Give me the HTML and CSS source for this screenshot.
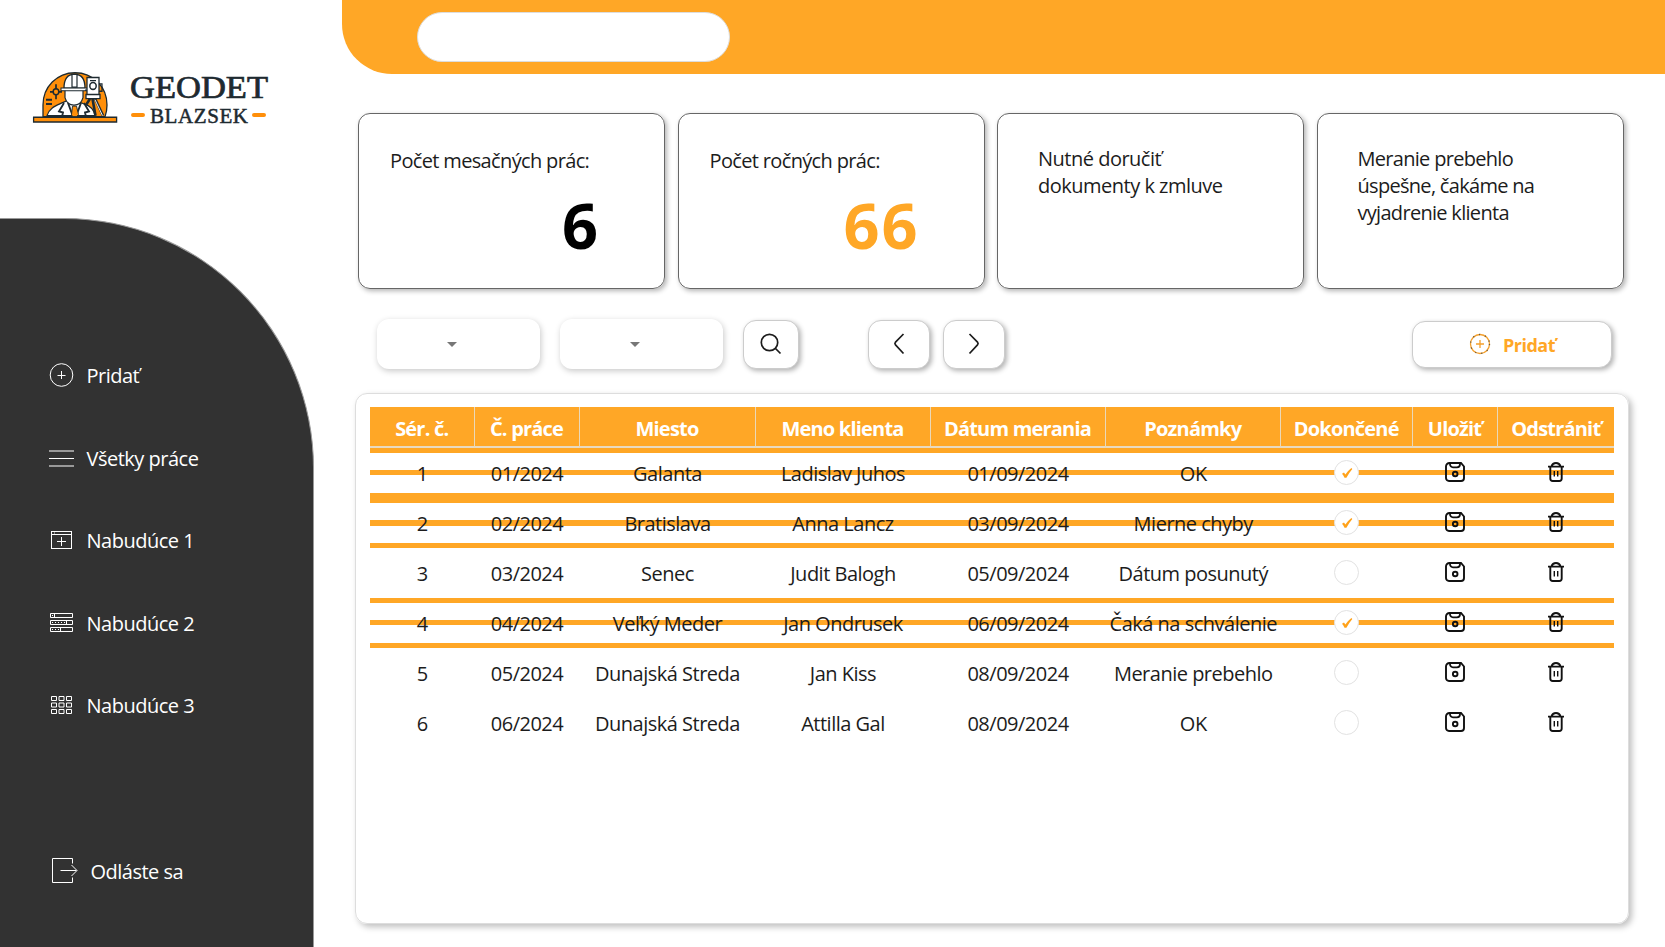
FILE: index.html
```html
<!DOCTYPE html>
<html lang="sk">
<head>
<meta charset="utf-8">
<title>Geodet Blazsek</title>
<link rel="stylesheet" href="styles.css">
</head>
<body>
<svg class="defs" width="0" height="0">
  <symbol id="save" viewBox="0 0 20 20"><path d="M4.500 1h11.500L19 4.500v11.500a3 3 0 0 1-3 3H4a3 3 0 0 1-3-3V4.500A3.500 3.500 0 0 1 4.500 1z" fill="none" stroke="#111" stroke-width="1.900"/><path d="M5 1.500v.8a3 3 0 0 0 3 3h4a3 3 0 0 0 3-3v-.8" fill="none" stroke="#111" stroke-width="1.800"/><circle cx="10.200" cy="12" r="2.300" fill="none" stroke="#111" stroke-width="1.900"/></symbol>
  <symbol id="trash" viewBox="0 0 16 20"><path d="M0 4.600h16M2.300 4.600v11.900a2.500 2.500 0 0 0 2.500 2.500h6.400a2.500 2.500 0 0 0 2.500-2.500V4.600M3.500 4.400C4.200 2 6 1 8 1s3.800 1 4.500 3.400" fill="none" stroke="#111" stroke-width="1.900"/><path d="M6.300 9v5.500M9.700 9v5.500" stroke="#111" stroke-width="1.400"/></symbol>
  <symbol id="check" viewBox="0 0 12 12"><path d="M1 6.800l2-1.200 1.400 1.800Q7 3.600 10.400 1l.9.900Q8 5.800 5.400 10.800H3.500Q2.500 8.300 1 6.800z" fill="#ffa21a"/></symbol>
</svg>
<div class="app">
  <aside class="side">
    <div class="brand">
      <svg class="logo" width="240" height="60" viewBox="0 0 240 60">
        <g transform="translate(0 -1) scale(1 1.060)">
        <path d="M10 45V34C10 17 24 3.500 42 3.500S74 17 74 34q0 6-2 11z" fill="#ff8f0a" stroke="#1e2a30" stroke-width="1.300"/>
        <path d="M14 44c2-7 8-9 15-12l10-4 12 5c7 2 10 6 11 11z" fill="#fff" stroke="#1e2a30" stroke-width="1.200"/>
        <path d="M32 19v8q2 7 9 7t9-7v-8z" fill="#fff" stroke="#1e2a30" stroke-width="1.200"/>
        <path d="M31 18q0-13 10.500-13T52 18z" fill="#fff" stroke="#1e2a30" stroke-width="1.300"/>
        <path d="M28 18h27v2.500H28z" fill="#fff" stroke="#1e2a30" stroke-width="1"/>
        <path d="M39 5h5v12h-5z" fill="#fff" stroke="#1e2a30" stroke-width="1.200"/>
        <path d="M31 32l-5 8 4 1-1 4M51 32l5 8-4 1 1 4M35 32l5 13M48 32l-5 13" fill="none" stroke="#1e2a30" stroke-width="1.800"/>
        <path d="M39.500 35h4l2 8-2 2h-4l-1-2z" fill="#ff8f0a" stroke="#1e2a30" stroke-width=".9"/>
        <path d="M54 8h12v16H54zM53 24h14v4H53z" fill="#fff" stroke="#1e2a30" stroke-width="1.300"/>
        <circle cx="60" cy="16" r="3.200" fill="#fff" stroke="#1e2a30" stroke-width="1.500"/>
        <path d="M57 11h6M54 20h-2M66 14h3v7h-3" fill="none" stroke="#1e2a30" stroke-width="1.200"/>
        <path d="M57 28l-4 6M59.500 28l3 16M62 28l8 16" fill="none" stroke="#1e2a30" stroke-width="2.600"/>
        <path d="M62 29l7.500 15" fill="none" stroke="#fff" stroke-width=".9"/>
        <circle cx="23" cy="21.500" r="2.800" fill="#ff8f0a" stroke="#1e2a30" stroke-width="1.500"/>
        <path d="M23 14.500v4.500M23 24v4.500M17 21.500h3.500M25.500 21.500H29M13 29h6M13 33h6" stroke="#1e2a30" stroke-width="1.700"/>
        <path d="M.600 45.500h83v4.500H.600z" fill="#ff8f0a" stroke="#1e2a30" stroke-width="1.300"/>
        </g>
        <path d="M100 45h10M221 45h10" stroke="#ff8f0a" stroke-width="4" stroke-linecap="round"/>
        <text class="geodet" x="97" y="28.200" textLength="138" lengthAdjust="spacingAndGlyphs">GEODET</text>
        <text class="blazsek" x="117" y="52.500" textLength="98">BLAZSEK</text>
      </svg>
    </div>
    <nav class="menu">
      <a class="item"><svg width="28" height="28"><circle cx="14.500" cy="14" r="11.300" fill="none" stroke="#fff"/><path d="M14.500 10v8M10.500 14.500h8" stroke="#fff"/></svg><span>Pridať</span></a>
      <a class="item"><svg width="28" height="28"><path d="M2 7h25M2 22h25" stroke="#999" stroke-width="2"/><path d="M2 14.500h25" stroke="#fff"/></svg><span>Všetky práce</span></a>
      <a class="item"><svg width="28" height="28"><rect x="4.500" y="5.500" width="20" height="17" fill="none" stroke="#fff"/><path d="M4 8.500h20M14.500 11v9M10 15.500h9" stroke="#fff"/><path d="M7.500 6v2" stroke="#888"/></svg><span>Nabudúce 1</span></a>
      <a class="item"><svg width="28" height="28"><path d="M3.500 4.500h22v4h-22zM3.500 11.500h22v4h-22zM3.500 18.500h22v4h-22zM7.500 4v5M19.500 11v5M13.500 18v5" fill="none" stroke="#fff"/><path d="M5 6.500h1M5 13.500h14M5 20.500h7" stroke="#fff" stroke-dasharray="1 2"/></svg><span>Nabudúce 2</span></a>
      <a class="item"><svg width="28" height="28"><path d="M4.500 5.500h5v4h-5zM12 5.500h5v4h-5zM19.500 5.500h5v4h-5zM4.500 12h5v4h-5zM12 12h5v4h-5zM19.500 12h5v4h-5zM4.500 18.500h5v4h-5zM12 18.500h5v4h-5zM19.500 18.500h5v4h-5z" fill="none" stroke="#fff"/></svg><span>Nabudúce 3</span></a>
      <a class="item out"><svg width="28" height="28"><path d="M21.500 6.500v-5h-20v24h20v-5M9.500 13.500h16M20.500 8l5.500 5.500-5.500 5.500" fill="none" stroke="#fff"/></svg><span>Odláste sa</span></a>
    </nav>
  </aside>
  <main class="main">
    <header class="top"><input class="search" type="text"></header>
    <section class="cards">
      <div class="card"><span class="label">Počet mesačných prác:</span><b class="num">6</b></div>
      <div class="card"><span class="label">Počet ročných prác:</span><b class="num amber">66</b></div>
      <div class="card note"><span>Nutné doručiť</span><span>dokumenty k zmluve</span></div>
      <div class="card note"><span>Meranie prebehlo</span><span>úspešne, čakáme na</span><span>vyjadrenie klienta</span></div>
    </section>
    <section class="tools">
      <div class="select"><i class="arrow"></i></div>
      <div class="select"><i class="arrow"></i></div>
      <button class="btn find"><svg width="22" height="22"><circle cx="9.500" cy="9.500" r="8.200"/><path d="M15.500 15.500l5 5"/></svg></button>
      <button class="btn prev"><svg width="12" height="22"><path d="M10.500 1L2.500 9.200q-1.200 1.300 0 2.600L10.500 20.500"/></svg></button>
      <button class="btn next"><svg width="12" height="22"><path d="M1.500 1l8 8.200q1.200 1.300 0 2.600L1.500 20.500"/></svg></button>
      <button class="btn add"><svg width="22" height="22"><circle cx="11" cy="11" r="9.500"/><circle class="specks" cx="11" cy="11" r="9.500"/><path d="M11 7v8M7 11h8"/></svg><span>Pridať</span></button>
    </section>
    <section class="panel">
      <div class="row head"><span>Sér. č.</span><span>Č. práce</span><span>Miesto</span><span>Meno klienta</span><span>Dátum merania</span><span>Poznámky</span><span>Dokončené</span><span>Uložiť</span><span>Odstrániť</span></div>
      <div class="row done"><span>1</span><span>01/2024</span><span>Galanta</span><span>Ladislav Juhos</span><span>01/09/2024</span><span>OK</span><i class="tick"><svg width="12" height="12"><use href="#check"/></svg></i><svg class="ic" width="20" height="20"><use href="#save"/></svg><svg class="ic" width="16" height="20"><use href="#trash"/></svg></div>
      <div class="row done"><span>2</span><span>02/2024</span><span>Bratislava</span><span>Anna Lancz</span><span>03/09/2024</span><span>Mierne chyby</span><i class="tick"><svg width="12" height="12"><use href="#check"/></svg></i><svg class="ic" width="20" height="20"><use href="#save"/></svg><svg class="ic" width="16" height="20"><use href="#trash"/></svg></div>
      <div class="row"><span>3</span><span>03/2024</span><span>Senec</span><span>Judit Balogh</span><span>05/09/2024</span><span>Dátum posunutý</span><i class="tick"></i><svg class="ic" width="20" height="20"><use href="#save"/></svg><svg class="ic" width="16" height="20"><use href="#trash"/></svg></div>
      <div class="row done"><span>4</span><span>04/2024</span><span>Veľký Meder</span><span>Jan Ondrusek</span><span>06/09/2024</span><span>Čaká na schválenie</span><i class="tick"><svg width="12" height="12"><use href="#check"/></svg></i><svg class="ic" width="20" height="20"><use href="#save"/></svg><svg class="ic" width="16" height="20"><use href="#trash"/></svg></div>
      <div class="row"><span>5</span><span>05/2024</span><span>Dunajská Streda</span><span>Jan Kiss</span><span>08/09/2024</span><span>Meranie prebehlo</span><i class="tick"></i><svg class="ic" width="20" height="20"><use href="#save"/></svg><svg class="ic" width="16" height="20"><use href="#trash"/></svg></div>
      <div class="row"><span>6</span><span>06/2024</span><span>Dunajská Streda</span><span>Attilla Gal</span><span>08/09/2024</span><span>OK</span><i class="tick"></i><svg class="ic" width="20" height="20"><use href="#save"/></svg><svg class="ic" width="16" height="20"><use href="#trash"/></svg></div>
    </section>
  </main>
</div>
</body>
</html>
```
FILE: styles.css
```css
* { box-sizing: border-box; }
body { margin: 0; background: #fff; color: #1c1c1c; font-family: "Open Sans", "Noto Sans", sans-serif; font-size: 20px; letter-spacing: -0.5px; }
.defs { display: block; height: 0; }
.app { display: flex; width: 1665px; height: 947px; overflow: hidden; }
.side { width: 314px; flex: none; display: flex; flex-direction: column; }
.brand { height: 218px; padding: 70px 0 0 33px; }
.logo { display: block; overflow: visible; }
.geodet, .blazsek { font-family: "Liberation Serif", serif; fill: #1e2a30; stroke: #1e2a30; letter-spacing: 0; }
.geodet { font-size: 30.500px; stroke-width: .7px; }
.blazsek { font-size: 21px; stroke-width: .5px; }
.menu { flex: 1; background: #323232; border: solid #999; border-width: 1px 1px 0 0; border-top-right-radius: 250px; padding: 142px 0 0 47px; color: #fff; display: flex; flex-direction: column; gap: 54.600px; }
.item { height: 28px; display: flex; align-items: center; gap: 11.500px; }
.item svg { flex: none; }
.item span { line-height: 28px; padding-top: 2px; }
.out { margin: 83px 0 0 4px; }
.main { flex: 1; margin-left: 28px; display: flex; flex-direction: column; }
.top { height: 74px; background: #ffa726; border-bottom-left-radius: 50px; padding: 12px 0 0 75px; }
.search { display: block; width: 313px; height: 50px; border: 1px solid #ddd; border-radius: 25px; background: #fff; outline: 0; }
.cards { display: flex; gap: 12.500px; padding: 39px 0 0 16px; }
.card { width: 307px; height: 176px; border: 1px solid #666; border-radius: 12px; box-shadow: 2px 2px 5px rgba(0,0,0,.3); padding: 33px 0 0 31px; display: flex; flex-direction: column; }
.label { line-height: 28px; letter-spacing: -0.650px; }
.num { align-self: flex-end; margin: 13px 64px 0 0; font-size: 63px; line-height: 74px; letter-spacing: 2px; color: #000; }
.amber { color: #ffa726; }
.note { padding: 31px 0 0 40px; }
.note span { line-height: 27px; }
.note:last-child { letter-spacing: -0.700px; }
.tools { display: flex; height: 50px; margin: 30px 0 0 35px; align-items: center; }
.select { width: 163px; height: 50px; border-radius: 12px; margin-right: 20px; background: #fff; box-shadow: 1px 2px 6px rgba(0,0,0,.22); padding: 23px 0 0 70px; }
.arrow { display: block; width: 0; border: 5px solid transparent; border-top-color: #777; border-bottom: 0; }
.btn { height: 49px; border: 1px solid #ccc; border-radius: 13px; background: #fff; box-shadow: 2px 2px 5px rgba(0,0,0,.3); display: flex; align-items: center; justify-content: center; padding: 0; font: inherit; letter-spacing: inherit; }
.btn svg { fill: none; stroke: #1c1c1c; stroke-width: 1.700; }
.find { width: 56px; }
.prev { width: 62px; margin-left: 69px; }
.next { width: 62px; margin-left: 13px; }
.add { width: 200px; height: 47px; margin-left: 407px; gap: 12px; color: #ffa726; font-size: 18px; font-weight: 700; }
.add svg { stroke: #f5a02c; stroke-width: 1.300; }
.add span { padding-top: 1px; }
.specks { stroke: #6b5a3c; stroke-dasharray: 1.200 5; }
.panel { width: 1274px; height: 531px; margin: 23.500px 0 0 13px; border: 1px solid #ddd; border-radius: 12px; box-shadow: 3px 3px 6px rgba(0,0,0,.25); padding: 13.500px 14px; }
.row { width: 1244px; height: 50px; display: grid; grid-template-columns: 104.500px 105px 176px 175px 175px 175.500px 131.500px 85px 116.500px; align-items: center; justify-items: center; }
.row > span { padding-top: 2px; white-space: nowrap; }
.head { height: 40.500px; background: #ffa726; border-bottom: 2px solid #e8d9c0; color: #fff; font-weight: 700; letter-spacing: -0.800px; align-items: stretch; justify-items: stretch; }
.head > span { text-align: center; border-right: 1px solid #ead8b8; line-height: 38px; padding-top: 3px; }
.head span:last-child { border-right: 0; }
.done { background: linear-gradient(#ffa726 5px, #fff 5px, #fff 22px, #ffa726 22px, #ffa726 27.500px, #fff 27.500px, #fff 45px, #ffa726 45px); }
.tick { width: 25px; height: 25px; border: 1px solid #e2e2e2; border-radius: 50%; background: #fff; display: flex; align-items: center; justify-content: center; }
.ic { display: block; margin-bottom: 1px; }
```
